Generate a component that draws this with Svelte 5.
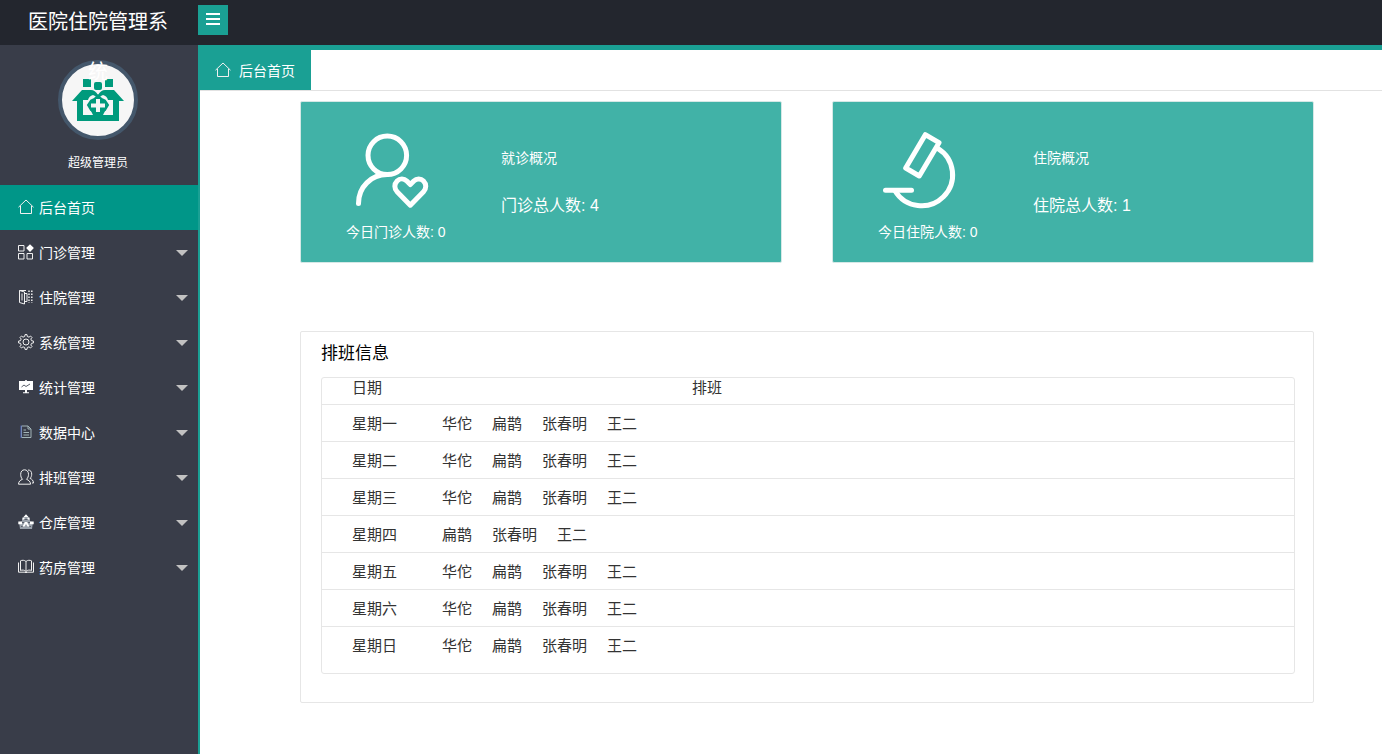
<script>
  const menus = [
    { name: "后台首页", icon: "home" },
    { name: "门诊管理", icon: "app", sub: true },
    { name: "住院管理", icon: "ward", sub: true },
    { name: "系统管理", icon: "gear", sub: true },
    { name: "统计管理", icon: "board", sub: true },
    { name: "数据中心", icon: "file", sub: true },
    { name: "排班管理", icon: "users", sub: true },
    { name: "仓库管理", icon: "store", sub: true },
    { name: "药房管理", icon: "book", sub: true }
  ];

  const all = ["华佗", "扁鹊", "张春明", "王二"];
  const schedule = [
    { day: "星期一", doctors: all },
    { day: "星期二", doctors: all },
    { day: "星期三", doctors: all },
    { day: "星期四", doctors: ["扁鹊", "张春明", "王二"] },
    { day: "星期五", doctors: all },
    { day: "星期六", doctors: all },
    { day: "星期日", doctors: all }
  ];

  let active = $state("后台首页");
</script>

{#snippet icon(name)}
  <svg class="icon" viewBox="0 0 16 16" aria-hidden="true">
    {#if name === "home"}
      <path d="M.5 8.200 8 1l7.500 7.200M2.500 7V14.500H13.500V7" />
    {:else if name === "app"}
      <path d="M.5 1.500h5.500V7H.5zM.5 9.500h5.500V15H.5zM9 9.500h5.500V15H9z" />
      <path class="solid" d="M12 .2 15.900 4.100 12 8 8.100 4.100z" />
    {:else if name === "ward"}
      <path d="M1.500 1.500v12l5 1.500V3zM1.500 1.500H8M4 4.500v7M6.500 4.500H9v8H6.500" />
      <path class="dots" d="M11 1.500v12.500M13.800 1.500v12.500" />
    {:else if name === "gear"}
      <circle cx="8" cy="8" r="3" />
      <path d="M6.700 2.500 7 .6h2l.3 1.900 1.700.7 1.500-1.200 1.500 1.500-1.200 1.500.7 1.700 1.900.3v2l-1.900.3-.7 1.700 1.200 1.500-1.500 1.500-1.500-1.200-1.700.7L9 15.400H7l-.3-1.900-1.700-.7L3.500 14 2 12.500 3.200 11l-.7-1.700L.6 9V7l1.900-.3L3.200 5 2 3.500 3.500 2 5 3.200z" />
    {:else if name === "board"}
      <path class="solid" d="M1 2h6.200V1h1.600v1H15v9H9v2.200h2v1H5v-1h2V11H1z" />
      <path class="ink" d="M3.500 8 6 6l2 1.500L12 5" />
    {:else if name === "file"}
      <g class="dim">
        <path d="M3.500 2h6.500l3 3v8.500H3.500zM10 2v3h3M5.500 6h2.500M5.500 8.500h5.500M5.500 11h5.500" />
      </g>
      <path class="blue" d="M3 1.500V14" />
    {:else if name === "users"}
      <path d="M.5 15.200c.2-3 1.800-4 4-4.900C3.200 9 2.700 7.300 2.700 5.300 2.700 2.500 4.200.8 6.500.8s4 1.700 4 4.500c0 2-.6 3.700-2 5 2 .9 3.900 1.900 4.100 4.900zM10 1c2.500 0 3.700 1.600 3.700 4.200 0 1.700-.5 3-1.600 4.200 1.800.8 3.200 1.800 3.400 4.600h-1.500" />
    {:else if name === "store"}
      <path class="solid grey" d="M8 1 12 5v2.500l3 .5-1 7H2L1 8l3-.5V5z" />
      <path class="ink" d="M6 5.500h4M4 8.500h2M10 8.500h2M3 12.500h2M11 12.500h2" />
      <path class="solid" d="M8 .3 10.500 3h-5zM4.500 3.500h2v2h-2zM9.500 3.500h2v2h-2zM.3 7.500H4v2.700H.3zM12 7.500h3.700v2.700H12zM7 8h2l2.500 4.500H9.500L8 10l-1.500 2.500h-2z" />
    {:else if name === "book"}
      <path d="M8 2.500C6.500 1 4 1 2.500 1.800v9.700C4 10.800 6.500 10.800 8 12.500c1.500-1.700 4-1.700 5.500-1V1.800C12 1 9.500 1 8 2.500zM8 2.500v10M.5 3.500v9.700h6.500q1 1.200 2 0h6.500V3.500" />
    {/if}
  </svg>
{/snippet}

<div class="layout">
  <header class="header">
    <h1 class="title">医院住院管理系统</h1>
    <button class="toggle" type="button" aria-label="菜单">
      <span></span>
      <span></span>
      <span></span>
    </button>
  </header>

  <div class="body">
    <aside class="side">
      <div class="user">
        <div class="avatar">
          <svg viewBox="0 0 72 72" aria-hidden="true">
            <g fill="#009a7c">
              <path d="M21 15h8v8h-8zM43 15h8v8h-8z" />
              <rect x="32" y="18" width="8" height="8" rx="2" />
              <path d="M10 37 20 26h9q4 0 7 5 3-5 7-5h9l10 11h-5v20H15V37z" />
            </g>
            <path d="M21 51V36h5q1-4 5-5l4 2q-9 4-8 10l4 8zM51 51V36h-5q-1-4-5-5l-4 2q9 4 8 10l-4 8z" fill="#f6f6f6" />
            <path
              d="M36 31.500 39.500 35 43 36.500 46 41 43 46 39.500 48 36 51 32.500 48 29 46 26 41 29 36.500 32.500 35z"
              fill="none" stroke="#009a7c" stroke-width="2"
            />
            <path d="M34 35h4v4.500h5v4h-5V48h-4v-4.500h-5v-4h5z" fill="#f6f6f6" />
          </svg>
        </div>
        <p>超级管理员</p>
      </div>
      <nav>
        {#each menus as item}
          <a
            href="#{item.icon}"
            class:active={active === item.name}
            onclick={() => (active = item.name)}
          >
            {@render icon(item.icon)}
            <span>{item.name}</span>
            {#if item.sub}<i class="caret"></i>{/if}
          </a>
        {/each}
      </nav>
    </aside>

    <main class="main">
      <div class="tabs">
        <a class="tab" href="#home">
          {@render icon("home")}
          <span>后台首页</span>
        </a>
      </div>

      <div class="content">
        <div class="cards">
          <section class="card">
            <div class="today">
              <svg viewBox="0 0 100 100" aria-hidden="true">
                <circle cx="41.300" cy="33.300" r="19.300" />
                <path d="M12.500 81.500C12.500 65 25 52.600 41.300 52.600" />
                <path d="M64.300 62.500 60.800 59C58 56.200 53.800 56.200 51.100 58.900C48.100 61.900 48.100 66.700 51.100 69.700L64.300 83.200 77.500 69.700C80.500 66.700 80.500 61.900 77.500 58.900C74.800 56.200 70.600 56.200 67.800 59z" />
              </svg>
              <p>今日门诊人数: 0</p>
            </div>
            <div class="total">
              <h2>就诊概况</h2>
              <p>门诊总人数: 4</p>
            </div>
          </section>
          <section class="card">
            <div class="today">
              <svg viewBox="0 0 100 100" aria-hidden="true">
                <path d="M47.300 12.700 61 20.700 41.300 54 27.700 46z" />
                <path d="M59.700 26.300A31 31 0 1 1 17 68.700" />
                <path d="M7.500 68.300H33.500" />
              </svg>
              <p>今日住院人数: 0</p>
            </div>
            <div class="total">
              <h2>住院概况</h2>
              <p>住院总人数: 1</p>
            </div>
          </section>
        </div>

        <section class="panel">
          <h2>排班信息</h2>
          <div class="box">
            <table>
              <thead>
                <tr>
                  <th class="day">日期</th>
                  <th class="duty">排班</th>
                </tr>
              </thead>
              <tbody>
                {#each schedule as row}
                  <tr>
                    <td class="day">{row.day}</td>
                    <td>
                      <div class="doctors">
                        {#each row.doctors as doctor}
                          <span>{doctor}</span>
                        {/each}
                      </div>
                    </td>
                  </tr>
                {/each}
              </tbody>
            </table>
          </div>
        </section>
      </div>
    </main>
  </div>
</div>

<style>
:global(body) {
  margin: 0;
  background: #fff;
}

.layout {
  display: flex;
  flex-direction: column;
  min-height: 100vh;
  font-family: "Liberation Sans", "Noto Sans CJK SC", sans-serif;
  font-size: 14px;
  color: #333;
}

h1, h2, p {
  margin: 0;
  font-weight: normal;
}

a {
  color: #fff;
  text-decoration: none;
}

.header {
  display: flex;
  align-items: flex-start;
  height: 45px;
  background: #23262e;
}

/* the last character wraps and hangs over the avatar */
.title {
  position: relative;
  z-index: 1;
  box-sizing: border-box;
  width: 196px;
  margin: -3px 2px 0 0;
  padding: 0 20px;
  font-size: 20px;
  line-height: 50px;
  text-align: center;
  color: #fff;
  pointer-events: none;
}

.toggle {
  display: flex;
  flex-direction: column;
  align-items: center;
  justify-content: center;
  gap: 3px;
  width: 30px;
  height: 30px;
  margin-top: 5px;
  padding: 0 0 2px;
  border: 0;
  background: #1aa094;
  cursor: pointer;
}

.toggle span {
  width: 14px;
  height: 2px;
  background: #fff;
}

.body {
  display: flex;
  flex: 1;
}

.side {
  width: 198px;
  flex-shrink: 0;
  background: #393d49;
}

.user {
  display: flex;
  flex-direction: column;
  align-items: center;
  height: 125px;
  padding: 15px 2px 0 0;
  font-size: 12px;
  color: #fff;
}

.avatar {
  width: 72px;
  height: 72px;
  border: 4px solid #44576b;
  border-radius: 50%;
  background: #f6f6f6;
}

.avatar svg {
  display: block;
}

.user p {
  margin-top: 13px;
  line-height: 20px;
}

nav a {
  display: flex;
  align-items: center;
  gap: 5px;
  height: 43px;
  padding: 0 10px 2px 18px;
}

nav a.active {
  background: #009688;
}

.caret {
  margin: 2px 0 0 auto;
  border: 6px solid transparent;
  border-top-color: #c2c2c2;
  border-bottom: 0;
}

.icon {
  width: 16px;
  height: 16px;
  fill: none;
  stroke: #f0f0f0;
  stroke-width: 1;
}

.icon .solid {
  fill: #fff;
  stroke: none;
}

.icon .grey {
  fill: #98a0aa;
}

.icon .ink {
  stroke: #5a5f6b;
}

.icon .dots {
  stroke-width: 1.5;
  stroke-dasharray: 1.5 1.5;
}

.icon .dim {
  stroke: #a3b5b8;
}

.icon .blue {
  stroke: #4a62b8;
}

.main {
  flex: 1;
  min-width: 0;
  border-top: 5px solid #1aa094;
  border-left: 2px solid #1aa094;
}

.tabs {
  display: flex;
  height: 40px;
  border-bottom: 1px solid #e2e2e2;
}

.tab {
  display: flex;
  align-items: center;
  gap: 8px;
  padding: 0 16px 0 15px;
  background: #1aa094;
}

.content {
  padding: 10px 68px 50px 100px;
}

.cards {
  display: grid;
  grid-template-columns: 1fr 1fr;
  gap: 50px;
}

.card {
  display: flex;
  gap: 55px;
  padding: 20px 45px;
  border: 1px solid #d5e8e6;
  border-radius: 2px;
  background: #41b2a7;
  color: #fff;
}

.today svg {
  display: block;
  width: 100px;
  height: 100px;
  fill: none;
  stroke: #fff;
  stroke-width: 5;
  stroke-linecap: round;
  stroke-linejoin: round;
}

.today p {
  line-height: 20px;
  white-space: nowrap;
}

.total {
  padding-top: 26px;
}

.total h2 {
  font-size: 14px;
  line-height: 20px;
}

.total p {
  margin-top: 28px;
  font-size: 16px;
  line-height: 20px;
}

.panel {
  margin-top: 68px;
  padding: 0 18px 28px 20px;
  border: 1px solid #e6e6e6;
  border-radius: 2px;
}

.panel h2 {
  padding-bottom: 1px;
  font-size: 17px;
  line-height: 44px;
  color: #000;
}

.box {
  padding-bottom: 9px;
  border: 1px solid #e6e6e6;
  border-radius: 3px;
}

table {
  width: 100%;
  border-spacing: 0;
  font-size: 15px;
  line-height: 20px;
}

th {
  padding: 0 0 6px;
  border-bottom: 1px solid #e6e6e6;
  font-weight: normal;
  text-align: left;
}

td {
  padding: 9px 0 7px;
  border-bottom: 1px solid #e6e6e6;
}

tbody tr:last-child td {
  border-bottom-color: transparent;
}

.day {
  width: 90px;
  padding-left: 30px;
}

.duty {
  padding-left: 250px;
}

.doctors {
  display: flex;
  gap: 20px;
}
</style>
